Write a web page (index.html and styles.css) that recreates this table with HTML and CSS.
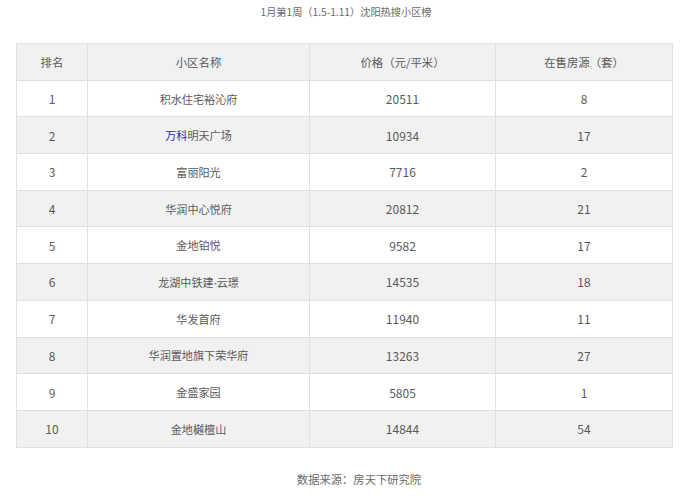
FILE: index.html
```html
<!DOCTYPE html>
<html lang="zh-CN">
<head>
<meta charset="utf-8">
<link rel="stylesheet" href="styles.css">
</head>
<body>
<div class="page">
  <p class="title">1月第1周（1.5-1.11）沈阳热搜小区榜</p>
  <table class="rank">
    <colgroup>
      <col class="c1"><col class="c2"><col class="c3"><col class="c4">
    </colgroup>
    <thead>
      <tr><th>排名</th><th>小区名称</th><th>价格（元/平米）</th><th>在售房源（套）</th></tr>
    </thead>
    <tbody>
      <tr><td>1</td><td>积水住宅裕沁府</td><td>20511</td><td>8</td></tr>
      <tr><td>2</td><td><span class="link">万科</span>明天广场</td><td>10934</td><td>17</td></tr>
      <tr><td>3</td><td>富丽阳光</td><td>7716</td><td>2</td></tr>
      <tr><td>4</td><td>华润中心悦府</td><td>20812</td><td>21</td></tr>
      <tr><td>5</td><td>金地铂悦</td><td>9582</td><td>17</td></tr>
      <tr><td>6</td><td>龙湖中铁建<span class="dot">·</span>云璟</td><td>14535</td><td>18</td></tr>
      <tr><td>7</td><td>华发首府</td><td>11940</td><td>11</td></tr>
      <tr><td>8</td><td>华润置地旗下荣华府</td><td>13263</td><td>27</td></tr>
      <tr><td>9</td><td>金盛家园</td><td>5805</td><td>1</td></tr>
      <tr><td>10</td><td>金地樾檀山</td><td>14844</td><td>54</td></tr>
    </tbody>
  </table>
  <p class="source">数据来源：房天下研究院</p>
</div>
</body>
</html>
```
FILE: styles.css
```css
html, body {
  margin: 0;
  padding: 0;
  background: #ffffff;
}
body {
  font-family: "Noto Sans CJK SC", "Noto Sans", sans-serif;
  color: #5a5a5a;
}
.page {
  padding: 0 16px;
}
.title {
  margin: 0;
  height: 24px;
  line-height: 24px;
  text-align: center;
  font-size: 10.2px;
  color: #6a6a6a;
}
.rank {
  margin-top: 19px;
  width: 656px;
  border-collapse: collapse;
  table-layout: fixed;
  font-size: 12px;
}
.c1 { width: 71px; }
.c2 { width: 222px; }
.c3 { width: 186px; }
.c4 { width: 177px; }
.rank th, .rank td {
  border: 1px solid #e0e0e0;
  height: 35.7px;
  padding: 0;
  text-align: center;
  vertical-align: middle;
  font-weight: normal;
  color: #5a5a5a;
}
.rank th {
  font-size: 11.4px;
}
.rank td:nth-child(2) {
  font-size: 11.1px;
}
.rank thead th {
  background: #f1f1f1;
}
.rank tbody tr:nth-child(even) td {
  background: #f1f1f1;
}
.link {
  color: #2a2aa0;
}
.dot {
  font-family: "Noto Sans", sans-serif;
}
.source {
  margin: 19px 0 0;
  padding-left: 26px;
  height: 24px;
  line-height: 24px;
  text-align: center;
  font-size: 11.3px;
  color: #6a6a6a;
}
```
